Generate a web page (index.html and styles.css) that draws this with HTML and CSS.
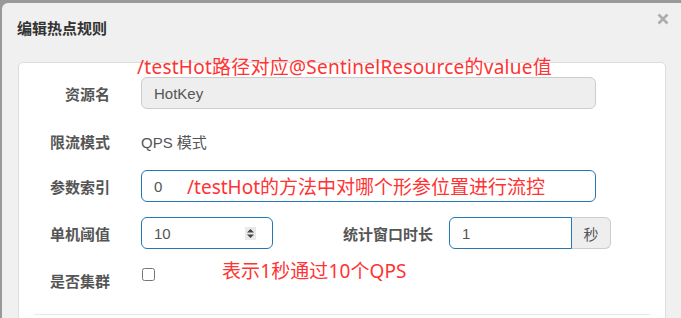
FILE: index.html
```html
<!DOCTYPE html>
<html lang="zh-CN">
<head>
    <meta charset="UTF-8">
    <title>编辑热点规则</title>
    <link rel="stylesheet" href="styles.css">
</head>
<body>
    <div class="modal">
        <div class="modal-header">
            <h4 class="modal-title">编辑热点规则</h4>
            <span class="close">
                <svg width="12" height="12" viewBox="0 0 12 12"><path d="M1.5 1.5 L10.5 10.5 M10.5 1.5 L1.5 10.5" stroke="#adadad" stroke-width="2.6" stroke-linecap="butt"/></svg>
            </span>
        </div>

        <div class="panel">
            <div class="form-row">
                <label class="form-label">资源名</label>
                <div class="form-input readonly">HotKey</div>
            </div>

            <div class="form-row row-static">
                <label class="form-label">限流模式</label>
                <div class="form-static">QPS 模式</div>
            </div>

            <div class="form-row">
                <label class="form-label">参数索引</label>
                <div class="form-input focus">0</div>
            </div>

            <div class="form-row">
                <label class="form-label">单机阈值</label>
                <div class="form-input focus input-small">
                    <span>10</span>
                    <span class="spinner">
                        <svg width="11" height="13" viewBox="0 0 11 13"><path d="M2 5.5 L5.5 2 L9 5.5 Z" fill="#444"/><path d="M2 7.5 L5.5 11 L9 7.5 Z" fill="#444"/></svg>
                    </span>
                </div>
                <label class="form-label label-inline">统计窗口时长</label>
                <div class="input-group">
                    <div class="form-input focus group-input">1</div>
                    <span class="addon">秒</span>
                </div>
            </div>

            <div class="form-row row-last">
                <label class="form-label">是否集群</label>
                <input type="checkbox" class="check">
            </div>

            <hr class="divider">

            <!-- annotations drawn over the screenshot -->
            <span class="note note-resource">/testHot路径对应@SentinelResource的value值</span>
            <span class="note note-index">/testHot的方法中对哪个形参位置进行流控</span>
            <span class="note note-qps">表示1秒通过10个QPS</span>
        </div>
    </div>
</body>
</html>
```

FILE: styles.css
```css
html, body {
    margin: 0;
    padding: 0;
    height: 318px;
    overflow: hidden;
}
body {
    background-color: #999;
    font-family: "Liberation Sans", "Noto Sans CJK SC", sans-serif;
    font-size: 15px;
    color: #555;
}
.modal {
    margin: 3px 0 0 2px;
    height: 315px;
    background-color: #f0f0f0;
    border-radius: 6px 0 0 0;
}
.modal-header {
    display: flex;
    justify-content: space-between;
    padding: 15px 12px 23px 15px;
}
.modal-title {
    margin: 0;
    font-size: 15px;
    line-height: 21px;
    font-weight: bold;
    color: #333;
}
.close {
    display: block;
    width: 12px;
    height: 12px;
    margin-top: -5px;
}
.close svg {
    display: block;
}
.panel {
    position: relative;
    box-sizing: border-box;
    width: 648px;
    margin-left: 16px;
    padding: 14px 15px 0;
    height: 260px;
    background-color: #fff;
    border: 1px solid #ddd;
    border-radius: 5px;
}
.form-row {
    display: flex;
    align-items: flex-start;
    margin-bottom: 15px;
}
.form-label {
    width: 76px;
    margin-right: 31px;
    padding-top: 8px;
    line-height: 20px;
    text-align: right;
    font-weight: bold;
    color: #555;
    flex-shrink: 0;
}
.row-static {
    height: 31px;
}
.row-static .form-label {
    padding-top: 9px;
}
.form-static {
    padding-top: 9px;
    line-height: 20px;
    color: #555;
}
.form-input {
    box-sizing: border-box;
    display: flex;
    align-items: center;
    width: 455px;
    height: 32px;
    padding: 0 12px;
    border: 1px solid #ccc;
    border-radius: 6px;
    color: #555;
    background-color: #fff;
}
.readonly {
    background-color: #eee;
}
.focus {
    border-color: #2377b4;
}
.input-small {
    width: 132px;
    padding-right: 16px;
    justify-content: space-between;
}
.spinner {
    display: block;
    width: 11px;
    height: 13px;
    background-color: #e9e9e9;
}
.spinner svg {
    display: block;
}
.label-inline {
    width: 91px;
    margin-left: 70px;
    margin-right: 15px;
    text-align: left;
}
.input-group {
    display: flex;
}
.group-input {
    width: 123px;
    border-radius: 6px 0 0 6px;
}
.addon {
    box-sizing: border-box;
    display: flex;
    align-items: center;
    justify-content: center;
    width: 39px;
    height: 32px;
    border: 1px solid #ccc;
    border-left: none;
    border-radius: 0 6px 6px 0;
    background-color: #eee;
    color: #555;
}
.row-last {
    margin-bottom: 0;
}
.check {
    width: 13px;
    height: 13px;
    margin: 4px 0 0 1px;
}
.divider {
    margin: 22px 0 0;
    border: 0;
    border-top: 1px solid #e8e8e8;
}
.note {
    position: absolute;
    font-family: "Noto Sans", "Noto Sans CJK SC", sans-serif;
    font-size: 19px;
    line-height: 19px;
    color: #f33;
    white-space: nowrap;
}
.note-resource {
    left: 118px;
    top: -5px;
    letter-spacing: 0.25px;
}
.note-index {
    left: 168px;
    top: 115px;
}
.note-qps {
    left: 203px;
    top: 199px;
    letter-spacing: 0.1px;
}
```
